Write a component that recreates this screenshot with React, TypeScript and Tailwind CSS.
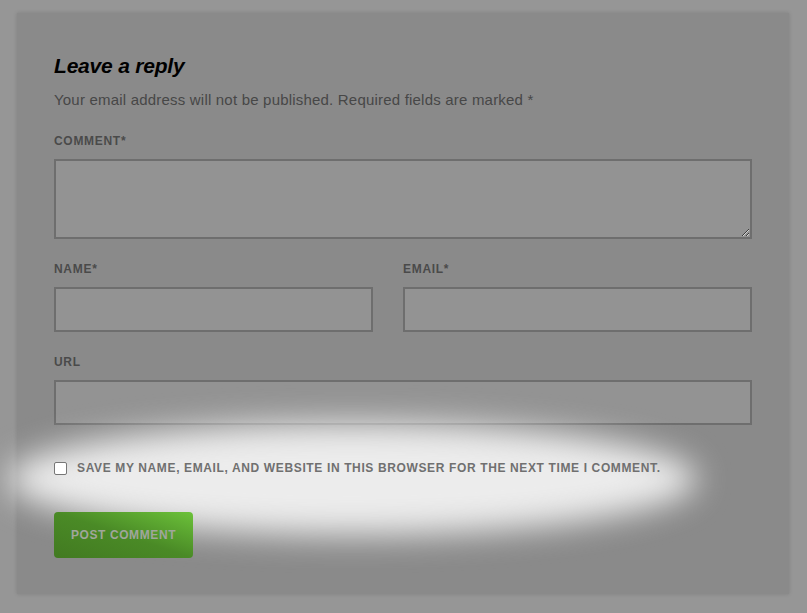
import * as React from "react"

const labelCls =
  "block text-[12px] leading-4 font-bold uppercase tracking-[0.7px] text-[#4a4a4a] [font-family:'Liberation_Sans',Arial,sans-serif]"

const inputCls =
  "block w-full h-[45px] bg-[#939393] border-2 border-[#6e6e6e] outline-none"

function Field({ label, className }: { label: string; className?: string }) {
  return (
    <div className={className}>
      <label className={labelCls}>{label}</label>
      <input type="text" className={`${inputCls} mt-[10px]`} />
    </div>
  )
}

export default function App() {
  return (
    <div className="min-h-screen w-full bg-[#969696] pt-[13px] pl-[17px] [font-family:'Liberation_Sans',Arial,sans-serif]">
      <div className="relative w-[772px] h-[581px] bg-[#8a8a8a] shadow-[0_0_4px_rgba(0,0,0,0.15)] pt-[39px] px-[37px]">
        {/* spotlight over the checkbox row */}
        <div className="pointer-events-none absolute left-[-10px] top-[410px] w-[690px] h-[112px] rounded-[50%] bg-[#ececec] blur-[16px]" />

        <h3 className="text-[21px] leading-7 font-bold italic tracking-[-0.2px] text-black">
          Leave a reply
        </h3>
        <p className="mt-[10px] text-[15px] leading-5 tracking-[0.2px] text-[#474747]">
          Your email address will not be published. Required fields are marked *
        </p>

        <div className="mt-[23px]">
          <label className={labelCls}>Comment*</label>
          <textarea className="mt-[10px] block w-full h-[80px] bg-[#939393] border-2 border-[#6e6e6e] outline-none" />
        </div>

        <div className="mt-[22px] flex gap-[30px]">
          <Field label="Name*" className="w-[319px]" />
          <Field label="Email*" className="flex-1" />
        </div>

        <Field label="URL" className="mt-[22px]" />

        <label className="relative z-10 mt-[35px] flex items-center h-4 gap-[10px]">
          <span className="w-[13px] h-[13px] rounded-[2px] border border-[#767676] bg-white shrink-0" />
          <span className="text-[12px] font-bold uppercase tracking-[0.63px] text-[#707070] whitespace-nowrap">
            Save my name, email, and website in this browser for the next time I comment.
          </span>
        </label>

        <button className="relative z-10 mt-[36px] w-[139px] h-[46px] rounded-[4px] bg-linear-to-bl from-[#6cc23a] via-[#4a8a26] to-[#427a21] text-[12px] font-bold uppercase tracking-[0.6px] text-[#a0a69c]">
          Post comment
        </button>
      </div>
    </div>
  )
}
